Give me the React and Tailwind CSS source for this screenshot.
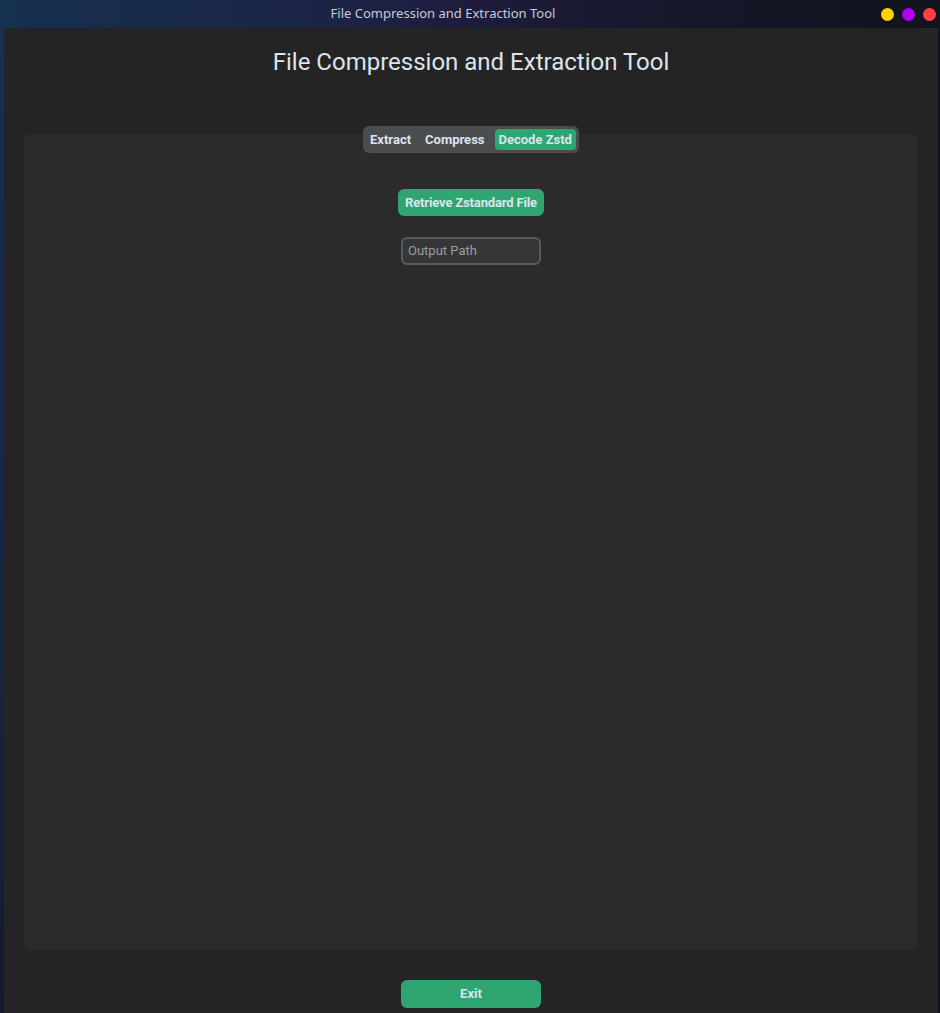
import { useState } from "react";

const tabs = ["Extract", "Compress", "Decode Zstd"];

function TitleBar() {
    return (
        <div className="h-[28px] flex items-center relative bg-[linear-gradient(90deg,#16304f_0%,#1c2446_35%,#1d1c3c_50%,#141728_75%,#11141d_100%)]">
            <span className="w-[886px] text-center text-[13px] text-[#c9ccd6] font-['Noto_Sans',sans-serif]">
                File Compression and Extraction Tool
            </span>
            <div className="absolute right-[4px] top-[8px] flex gap-[8px]">
                <span className="w-[13px] h-[13px] rounded-full bg-[#ffd200]" />
                <span className="w-[13px] h-[13px] rounded-full bg-[#b000f0]" />
                <span className="w-[13px] h-[13px] rounded-full bg-[#ff4040]" />
            </div>
        </div>
    );
}

export default function App() {
    const [tab, setTab] = useState("Decode Zstd");
    const [outPath, setOutPath] = useState("");

    return (
        <div className="w-[940px] h-[1013px] flex flex-col bg-[#11141d] font-['Roboto',sans-serif] overflow-hidden">
            <TitleBar />
            <div className="flex flex-1">
                <div className="w-[4px] bg-[linear-gradient(180deg,#173050_0%,#16284a_50%,#141a2c_100%)]" />
                <div className="flex-1 bg-[#242424] flex flex-col">
                    <h1 className="text-center text-[24px] leading-[28px] text-[#dce4ee] mt-[20px]">
                        File Compression and Extraction Tool
                    </h1>
                    <div className="mx-[20px] mt-[50px] flex flex-col items-center">
                        <div className="relative z-10 flex items-center h-[27px] p-[3px] rounded-[6px] bg-[#4a4d50]">
                            {tabs.map((t) => (
                                <button
                                    key={t}
                                    onClick={() => setTab(t)}
                                    className={
                                        tab === t
                                            ? "h-[21px] px-[4px] rounded-[4px] bg-[#2fa572] text-[13px] font-bold text-[#dce4ee]"
                                            : "h-[21px] px-[4px] mr-[6px] rounded-[4px] text-[13px] font-bold text-[#dce4ee]"
                                    }
                                >
                                    {t}
                                </button>
                            ))}
                        </div>
                        <div className="-mt-[19px] w-full h-[816px] rounded-[6px] bg-[#2b2b2b] flex flex-col items-center pt-[55px]">
                            <button className="w-[146px] h-[27px] rounded-[6px] bg-[#2fa572] text-[13px] font-bold tracking-[-0.15px] text-[#dce4ee]">
                                Retrieve Zstandard File
                            </button>
                            <input
                                value={outPath}
                                onChange={(e) => setOutPath(e.target.value)}
                                placeholder="Output Path"
                                className="mt-[21px] w-[140px] h-[28px] px-[5px] pb-[1px] rounded-[6px] border-2 border-[#565b5e] bg-[#343638] text-[13px] text-[#dce4ee] placeholder:text-[#9e9e9e] outline-none"
                            />
                        </div>
                    </div>
                    <div className="flex justify-center mt-[30px]">
                        <button className="w-[140px] h-[28px] rounded-[6px] bg-[#2fa572] text-[13px] font-bold text-[#dce4ee]">
                            Exit
                        </button>
                    </div>
                </div>
                <div className="w-[2px] bg-[#11141d]" />
            </div>
        </div>
    );
}
